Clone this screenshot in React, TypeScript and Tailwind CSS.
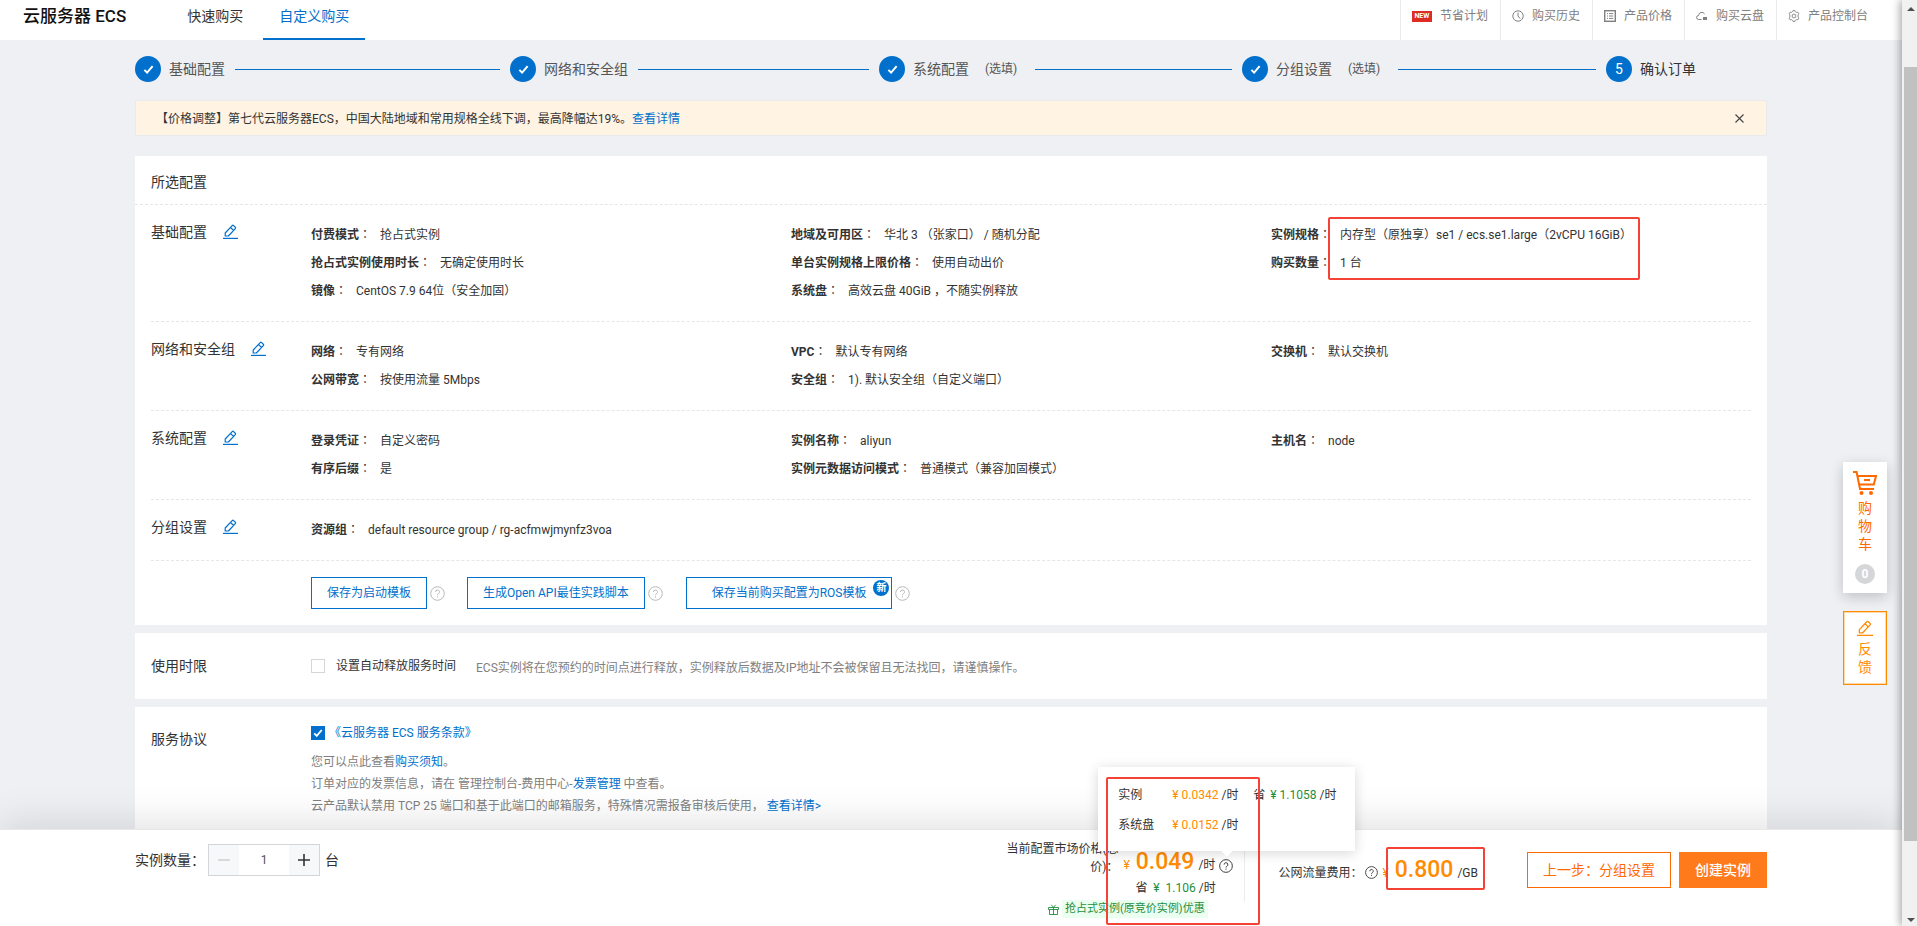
import { useState } from "react";
import type { ReactNode } from "react";

const FONT = "font-['Roboto','Noto_Sans_CJK_SC',sans-serif]";

function EditIcon({ className }: { className: string }) {
  return (
    <svg viewBox="0 0 15 15" fill="none" stroke="currentColor" className={className} aria-hidden="true">
      <path d="M2.2 12V9L9.2 1.6a1 1 0 0 1 1.4 0l1.7 1.6a1 1 0 0 1 0 1.4L5.4 12Z M7.4 3.4l3.2 3.1" strokeWidth="1.2" strokeLinejoin="round" />
      <path d="M0 14.4H15" strokeWidth="1.2" />
    </svg>
  );
}

function HelpIcon({ className }: { className: string }) {
  return (
    <svg viewBox="0 0 15 15" fill="none" stroke="currentColor" className={className} aria-hidden="true">
      <circle cx="7.5" cy="7.5" r="6.8" />
      <path d="M5.5 6a2 2 0 1 1 3 1.7c-.7.4-1 .7-1 1.5M7.5 10.3v1.2" />
    </svg>
  );
}

function CheckMark({ className }: { className: string }) {
  return (
    <svg viewBox="0 0 12 12" fill="none" stroke="currentColor" strokeWidth="2.2" className={className} aria-hidden="true">
      <path d="M1.5 6.4l3 3L10.5 2.4" />
    </svg>
  );
}

function ClockIcon() {
  return (
    <svg viewBox="0 0 12 12" fill="none" stroke="currentColor" className="size-3" aria-hidden="true">
      <circle cx="6" cy="6" r="5.2" />
      <path d="M6 2.5V6l2 2.5" />
    </svg>
  );
}

function ListIcon() {
  return (
    <svg viewBox="0 0 12 12" fill="none" stroke="currentColor" className="size-3" aria-hidden="true">
      <rect x=".7" y=".7" width="10.6" height="10.6" strokeWidth="1.4" />
      <path d="M3 3.6h1M5 3.6h4.2M3 6h1M5 6h4.2M3 8.4h1M5 8.4h4.2" />
    </svg>
  );
}

function CloudDiskIcon() {
  return (
    <svg viewBox="0 0 12 12" fill="none" stroke="currentColor" className="size-3" aria-hidden="true">
      <path d="M5.5 9.5H2.6a2 2 0 0 1 0-4A3.2 3.2 0 0 1 8.6 4" />
      <rect x="7" y="7" width="4" height="3" fill="currentColor" stroke="none" />
    </svg>
  );
}

function GearIcon() {
  return (
    <svg viewBox="0 0 12 12" fill="none" stroke="currentColor" strokeWidth=".9" className="size-3" aria-hidden="true">
      <path d="M4.6 1.7L5 .6h2l.4 1.1 1.3.7 1.2-.2 1 1.7-.8.9v2.4l.8.9-1 1.7-1.2-.2-1.3.7L7 11.4H5l-.4-1.1-1.3-.7-1.2.2-1-1.7.8-.9V4.8l-.8-.9 1-1.7 1.2.2Z" />
      <circle cx="6" cy="6" r="1.9" />
    </svg>
  );
}

function NewBadge() {
  return (
    <span className="flex h-[11px] w-5 items-center justify-center bg-[#dc2c24] text-[7px] font-bold leading-none text-white">NEW</span>
  );
}

const NAV: { label: string; icon: ReactNode }[] = [
  { label: "节省计划", icon: <NewBadge /> },
  { label: "购买历史", icon: <ClockIcon /> },
  { label: "产品价格", icon: <ListIcon /> },
  { label: "购买云盘", icon: <CloudDiskIcon /> },
  { label: "产品控制台", icon: <GearIcon /> },
];

function Header() {
  return (
    <header className="flex h-10 shrink-0 justify-between bg-white pl-[23px] pr-[22px]">
      <div className="flex">
        <h1 className="mr-[45px] text-[17px] font-medium leading-8 text-[#111]">云服务器 ECS</h1>
        <nav className="flex text-sm leading-8">
          <a href="#quick" className="px-4 text-[#333]">快速购买</a>
          <a href="#custom" className="ml-1 border-b-2 border-[#0070cc] px-4 text-[#0070cc]">自定义购买</a>
        </nav>
      </div>
      <nav className="flex text-xs text-[#808080]">
        {NAV.map((n) => (
          <a key={n.label} href="#nav" className="flex items-center gap-2 border-l border-[#ebebeb] pb-2 pl-[11px] pr-3">
            {n.icon}
            {n.label}
          </a>
        ))}
      </nav>
    </header>
  );
}

const STEPS: { label: string; optional?: boolean }[] = [
  { label: "基础配置" },
  { label: "网络和安全组" },
  { label: "系统配置", optional: true },
  { label: "分组设置", optional: true },
  { label: "确认订单" },
];

function Steps() {
  return (
    <ol className="grid grid-cols-[375fr_369fr_363fr_364fr_161fr] text-sm">
      {STEPS.map((s, i) => {
        const last = i === STEPS.length - 1;
        return (
          <li key={s.label} className="flex items-center">
            <span className="flex size-[26px] shrink-0 items-center justify-center rounded-full bg-[#0070cc] text-sm text-white">
              {last ? "5" : <CheckMark className="size-[11px]" />}
            </span>
            <span className={last ? "ml-2 text-[#333]" : "ml-2 text-[#555]"}>{s.label}</span>
            {s.optional && <span className="ml-4 mr-2 text-xs text-[#555]">(选填)</span>}
            {!last && <span className="mx-[10px] h-px flex-1 bg-[#0070cc]" />}
          </li>
        );
      })}
    </ol>
  );
}

type Item = [string, string];
const SECTIONS: { title: string; cols: Item[][] }[] = [
  {
    title: "基础配置",
    cols: [
      [["付费模式", "抢占式实例"], ["抢占式实例使用时长", "无确定使用时长"], ["镜像", "CentOS 7.9 64位（安全加固）"]],
      [["地域及可用区", "华北 3 （张家口） / 随机分配"], ["单台实例规格上限价格", "使用自动出价"], ["系统盘", "高效云盘 40GiB ，不随实例释放"]],
      [["实例规格", "内存型（原独享）se1 / ecs.se1.large（2vCPU 16GiB）"], ["购买数量", "1 台"]],
    ],
  },
  {
    title: "网络和安全组",
    cols: [
      [["网络", "专有网络"], ["公网带宽", "按使用流量 5Mbps"]],
      [["VPC", "默认专有网络"], ["安全组", "1). 默认安全组（自定义端口）"]],
      [["交换机", "默认交换机"]],
    ],
  },
  {
    title: "系统配置",
    cols: [
      [["登录凭证", "自定义密码"], ["有序后缀", "是"]],
      [["实例名称", "aliyun"], ["实例元数据访问模式", "普通模式（兼容加固模式）"]],
      [["主机名", "node"]],
    ],
  },
  { title: "分组设置", cols: [[["资源组", "default resource group / rg-acfmwjmynfz3voa"]]] },
];

function ConfigCard() {
  return (
    <section className="bg-white">
      <h2 className="border-b border-dashed border-[#e6e6e6] px-4 pb-[11px] pt-[15px] text-sm leading-[22px] text-[#333]">所选配置</h2>
      <div className="px-4">
        {SECTIONS.map((s, i) => (
          <div key={s.title} className="flex border-b border-dashed border-[#e6e6e6] py-4">
            <div className="flex w-40 shrink-0 items-start gap-4 text-sm leading-[22px] text-[#333]">
              <h3>{s.title}</h3>
              <button type="button" aria-label={`编辑${s.title}`} className="mt-[3px] text-[#0070cc]">
                <EditIcon className="size-[15px]" />
              </button>
            </div>
            <div className="grid flex-1 grid-cols-3 text-xs leading-7 text-[#333]">
              {s.cols.map((col, c) => (
                <dl key={c} className="relative">
                  {col.map(([k, v]) => (
                    <div key={k} className="flex whitespace-nowrap">
                      <dt className="mr-[9px] font-bold">
                        {k}
                        <span className="font-['Roboto','Noto_Sans_CJK_JP'] font-normal">：</span>
                      </dt>
                      <dd>{v}</dd>
                    </div>
                  ))}
                  {i === 0 && c === 2 && (
                    <div className="pointer-events-none absolute -top-1 left-[57px] h-[63px] w-[312px] rounded-xs border-2 border-[#f44336]" />
                  )}
                </dl>
              ))}
            </div>
          </div>
        ))}
        <div className="flex items-center py-4 pl-40 text-xs text-[#0070cc]">
          <button type="button" className="h-8 border border-[#0070cc] px-[15px]">保存为启动模板</button>
          <HelpIcon className="ml-[3px] size-[15px] text-[#b8b8b8]" />
          <button type="button" className="ml-[22px] h-8 border border-[#0070cc] px-[15px]">生成Open API最佳实践脚本</button>
          <HelpIcon className="ml-[3px] size-[15px] text-[#b8b8b8]" />
          <button type="button" className="relative ml-[23px] h-8 border border-[#0070cc] px-[25px]">
            保存当前购买配置为ROS模板
            <span className="absolute right-0.5 top-0.5 flex size-4 items-center justify-center rounded-full bg-[#0070cc] text-[10px] font-bold text-white">新</span>
          </button>
          <HelpIcon className="ml-[3px] size-[15px] text-[#b8b8b8]" />
        </div>
      </div>
    </section>
  );
}

function TimeCard() {
  return (
    <section className="mt-2 flex h-[66px] shrink-0 items-center bg-white px-4">
      <h2 className="w-40 text-sm text-[#333]">使用时限</h2>
      <label className="flex items-center text-xs text-[#333]">
        <input type="checkbox" className="mr-[11px] size-[14px] appearance-none border border-[#d4d6d9] bg-white" />
        设置自动释放服务时间
      </label>
      <p className="ml-5 pt-1 text-xs text-[#808080]">
        ECS实例将在您预约的时间点进行释放，实例释放后数据及IP地址不会被保留且无法找回，请谨慎操作。
      </p>
    </section>
  );
}

function TermsCard() {
  return (
    <section className="mt-2 flex flex-1 bg-white px-4 pt-4">
      <h2 className="w-40 pt-[5px] text-sm leading-[22px] text-[#333]">服务协议</h2>
      <div className="text-xs">
        <div className="flex items-center leading-5">
          <span className="grid size-[14px] place-items-center">
            <input
              id="terms"
              type="checkbox"
              defaultChecked
              className="peer col-start-1 row-start-1 size-[14px] appearance-none border border-[#0070cc] checked:bg-[#0070cc]"
            />
            <CheckMark className="pointer-events-none col-start-1 row-start-1 hidden size-[10px] text-white peer-checked:block" />
          </span>
          <label htmlFor="terms" className="ml-1 text-[#0070cc]">《云服务器 ECS 服务条款》</label>
        </div>
        <div className="mt-2 leading-[22px] text-[#808080]">
          <p>您可以点此查看<a href="#notice" className="text-[#0070cc]">购买须知</a>。</p>
          <p>订单对应的发票信息，请在 管理控制台-费用中心-<a href="#invoice" className="text-[#0070cc]">发票管理</a> 中查看。</p>
          <p>云产品默认禁用 TCP 25 端口和基于此端口的邮箱服务，特殊情况需报备审核后使用， <a href="#port" className="text-[#0070cc]">查看详情&gt;</a></p>
        </div>
      </div>
    </section>
  );
}

function SideTools() {
  return (
    <div className="absolute right-[15px] top-[422px] flex w-11 flex-col gap-[18px] text-sm leading-[18px]">
      <button type="button" className="flex h-[131px] flex-col items-center bg-white pt-[9px] text-[#ff6a00] shadow-[0_4px_14px_rgba(0,0,0,0.2)]">
        <svg viewBox="0 0 24 24" fill="none" stroke="currentColor" strokeWidth="2" className="size-6" aria-hidden="true">
          <path d="M0 1h3.6L7 18h14M4.6 5H23l-2.2 8.6H6.2M11 9h6" />
          <circle cx="8.5" cy="22" r="2" fill="currentColor" stroke="none" />
          <circle cx="18" cy="22" r="2" fill="currentColor" stroke="none" />
        </svg>
        <span className="mt-1 w-[14px]">购物车</span>
        <span className="mt-[11px] flex size-5 items-center justify-center rounded-full bg-[#d5d6d8] text-xs font-bold text-white">0</span>
      </button>
      <button type="button" className="flex h-[74px] flex-col items-center border border-[#ff8c00] bg-white pt-2 text-[#ff8c00] ring-1 ring-inset ring-[#ffd9a8]">
        <EditIcon className="size-4" />
        <span className="mt-1 w-[14px]">反馈</span>
      </button>
    </div>
  );
}

function PricePopup() {
  return (
    <div className="absolute -right-[122px] bottom-full z-10 h-[84px] w-[257px] bg-white px-5 pt-[13px] text-xs leading-[30px] text-[#333] shadow-[0_2px_12px_rgba(0,0,0,0.16)]">
      <div className="grid grid-cols-[52px_80px_1fr] whitespace-nowrap">
        <span>实例</span>
        <span className="pl-0.5"><span className="text-[#ff8c00]">¥ 0.0342</span> /时</span>
        <span className="pl-[3px]">省 <span className="ml-0.5 text-[#1e8e3e]">¥ 1.1058</span> /时</span>
        <span>系统盘</span>
        <span className="pl-0.5"><span className="text-[#ff8c00]">¥ 0.0152</span> /时</span>
      </div>
      <span className="absolute -bottom-1 right-[124px] size-2 rotate-45 bg-white" />
    </div>
  );
}

function Footer() {
  const [count, setCount] = useState(1);
  return (
    <footer className="relative z-10 flex h-[97px] shrink-0 justify-between border-t border-[#e8e8e8] bg-white px-[135px] shadow-[0_-6px_40px_rgba(0,0,0,0.12)]">
      <div className="flex items-start pt-[14px] text-sm leading-8 text-[#333]">
        <label htmlFor="count">实例数量：</label>
        <div className="ml-[3px] mr-[5px] flex h-8 w-28 border border-[#d4d6d9]">
          <button type="button" aria-label="减少" onClick={() => setCount(Math.max(1, count - 1))} className="flex w-[30px] items-center justify-center bg-[#f7f8fa] text-[#ccc]">
            <svg viewBox="0 0 12 12" stroke="currentColor" strokeWidth="1.4" className="size-3" aria-hidden="true"><path d="M0 6h12" /></svg>
          </button>
          <input id="count" value={count} onChange={(e) => setCount(Number(e.target.value) || 1)} className="w-0 flex-1 text-center text-xs text-[#555] outline-none" />
          <button type="button" aria-label="增加" onClick={() => setCount(count + 1)} className="flex w-[30px] items-center justify-center bg-[#f7f8fa] text-[#333]">
            <svg viewBox="0 0 12 12" stroke="currentColor" strokeWidth="1.6" className="size-3" aria-hidden="true"><path d="M0 6h12M6 0v12" /></svg>
          </button>
        </div>
        台
      </div>

      <div className="flex text-xs text-[#333]">
        <div className="relative w-[229px]">
          <div className="flex pt-[10px]">
            <span className="w-28 shrink-0 whitespace-nowrap text-right leading-[18px]">
              当前配置市场价格(总
              <br />
              价)：
            </span>
            <div className="ml-[5px] flex flex-1 flex-col">
              <div className="mt-0.5 flex items-baseline whitespace-nowrap leading-none">
                <span className="text-[#ff8c00]">¥</span>
                <strong className="ml-1.5 text-[23px] font-medium leading-10 text-[#ff8c00]">0.049</strong>
                <span className="ml-1">/时</span>
                <span className="relative ml-1 self-center pt-2">
                  <HelpIcon className="size-[14px]" />
                  <PricePopup />
                </span>
              </div>
              <p className="-mt-1.5 whitespace-pre pl-3 leading-6">
                省 <span className="text-[#1e8e3e]"> ¥  1.106</span> /时
              </p>
            </div>
          </div>
          <p className="flex items-center justify-center pl-[14px] text-[11px] text-[#1e8e3e]">
            <svg viewBox="0 0 11 11" fill="none" stroke="currentColor" className="mr-[3px] size-[11px]" aria-hidden="true">
              <path d="M.5 3.5h10v2H.5ZM1.5 5.5v5h8v-5M5.5 3.5v7M5.5 3.3L3.3.8M5.5 3.3L7.7.8" strokeWidth=".9" />
            </svg>
            <span className="whitespace-nowrap bg-[#ebfff0] px-[3px] leading-[18px]">抢占式实例(原竞价实例)优惠</span>
          </p>
          <div className="pointer-events-none absolute -top-[53px] left-[100px] z-20 h-[148px] w-[154px] rounded-xs border-2 border-[#f44336]" />
        </div>
        <div className="ml-[9px] mt-5 h-[52px] border-l border-[#ececec]" />
        <div className="relative ml-[33px] mt-[22px] flex h-9 items-baseline whitespace-nowrap leading-none">
          公网流量费用：
          <HelpIcon className="ml-[3px] size-[13px] translate-y-0.5" />
          <span className="ml-1 text-[#ff8c00]">¥</span>
          <strong className="ml-1.5 text-[23px] font-medium leading-9 text-[#ff8c00]">0.800</strong>
          <span className="ml-1">/GB</span>
          <div className="pointer-events-none absolute -right-[7px] -top-[5px] h-[43px] w-[99px] rounded-xs border-2 border-[#f44336]" />
        </div>
        <div className="ml-[49px] mt-[22px] flex h-9 gap-2 text-sm">
          <button type="button" className="w-36 border border-[#ff6a00] text-[#ff6a00]">上一步：分组设置</button>
          <button type="button" className="w-[88px] bg-[#ff7a1a] font-medium text-white">创建实例</button>
        </div>
      </div>
    </footer>
  );
}

function ScrollRail() {
  return (
    <div aria-hidden="true" className="relative z-20 flex w-[15px] shrink-0 flex-col items-center bg-[#f1f1f1] pl-0.5 shadow-[-2px_0_8px_rgba(0,0,0,0.35)]">
      <svg viewBox="0 0 8 4" className="mt-[7px] h-1 w-2 fill-[#505050]"><path d="M0 4L4 0l4 4Z" /></svg>
      <div className="mt-14 w-full flex-[774] bg-[#c1c1c1]" />
      <div className="flex-[77]" />
      <svg viewBox="0 0 8 4" className="mb-1 h-1 w-2 fill-[#505050]"><path d="M0 0l4 4 4-4Z" /></svg>
    </div>
  );
}

export default function App() {
  const [notice, setNotice] = useState(true);
  return (
    <div className={`flex h-screen overflow-hidden bg-[#eff0f4] ${FONT}`}>
      <div className="flex min-w-0 flex-1 flex-col">
        <Header />
        <main className="relative flex min-h-0 flex-1 flex-col px-[135px] pt-4">
          <Steps />
          {notice && (
            <div className="mt-[18px] flex h-9 shrink-0 items-center justify-between border border-[#e9eaec] bg-[#fff3e4] pl-5 pr-[22px] text-xs text-[#333]">
              <p className="pt-0.5">
                【价格调整】第七代云服务器ECS，中国大陆地域和常用规格全线下调，最高降幅达19%。
                <a href="#details" className="text-[#0070cc]">查看详情</a>
              </p>
              <button type="button" aria-label="关闭" onClick={() => setNotice(false)} className="text-[#444]">
                <svg viewBox="0 0 9 9" fill="none" stroke="currentColor" strokeWidth="1.1" className="size-[9px]" aria-hidden="true"><path d="M.5.5l8 8M8.5.5l-8 8" /></svg>
              </button>
            </div>
          )}
          <div className="mt-5 flex min-h-0 flex-1 flex-col">
            <ConfigCard />
            <TimeCard />
            <TermsCard />
          </div>
          <SideTools />
        </main>
        <Footer />
      </div>
      <ScrollRail />
    </div>
  );
}
